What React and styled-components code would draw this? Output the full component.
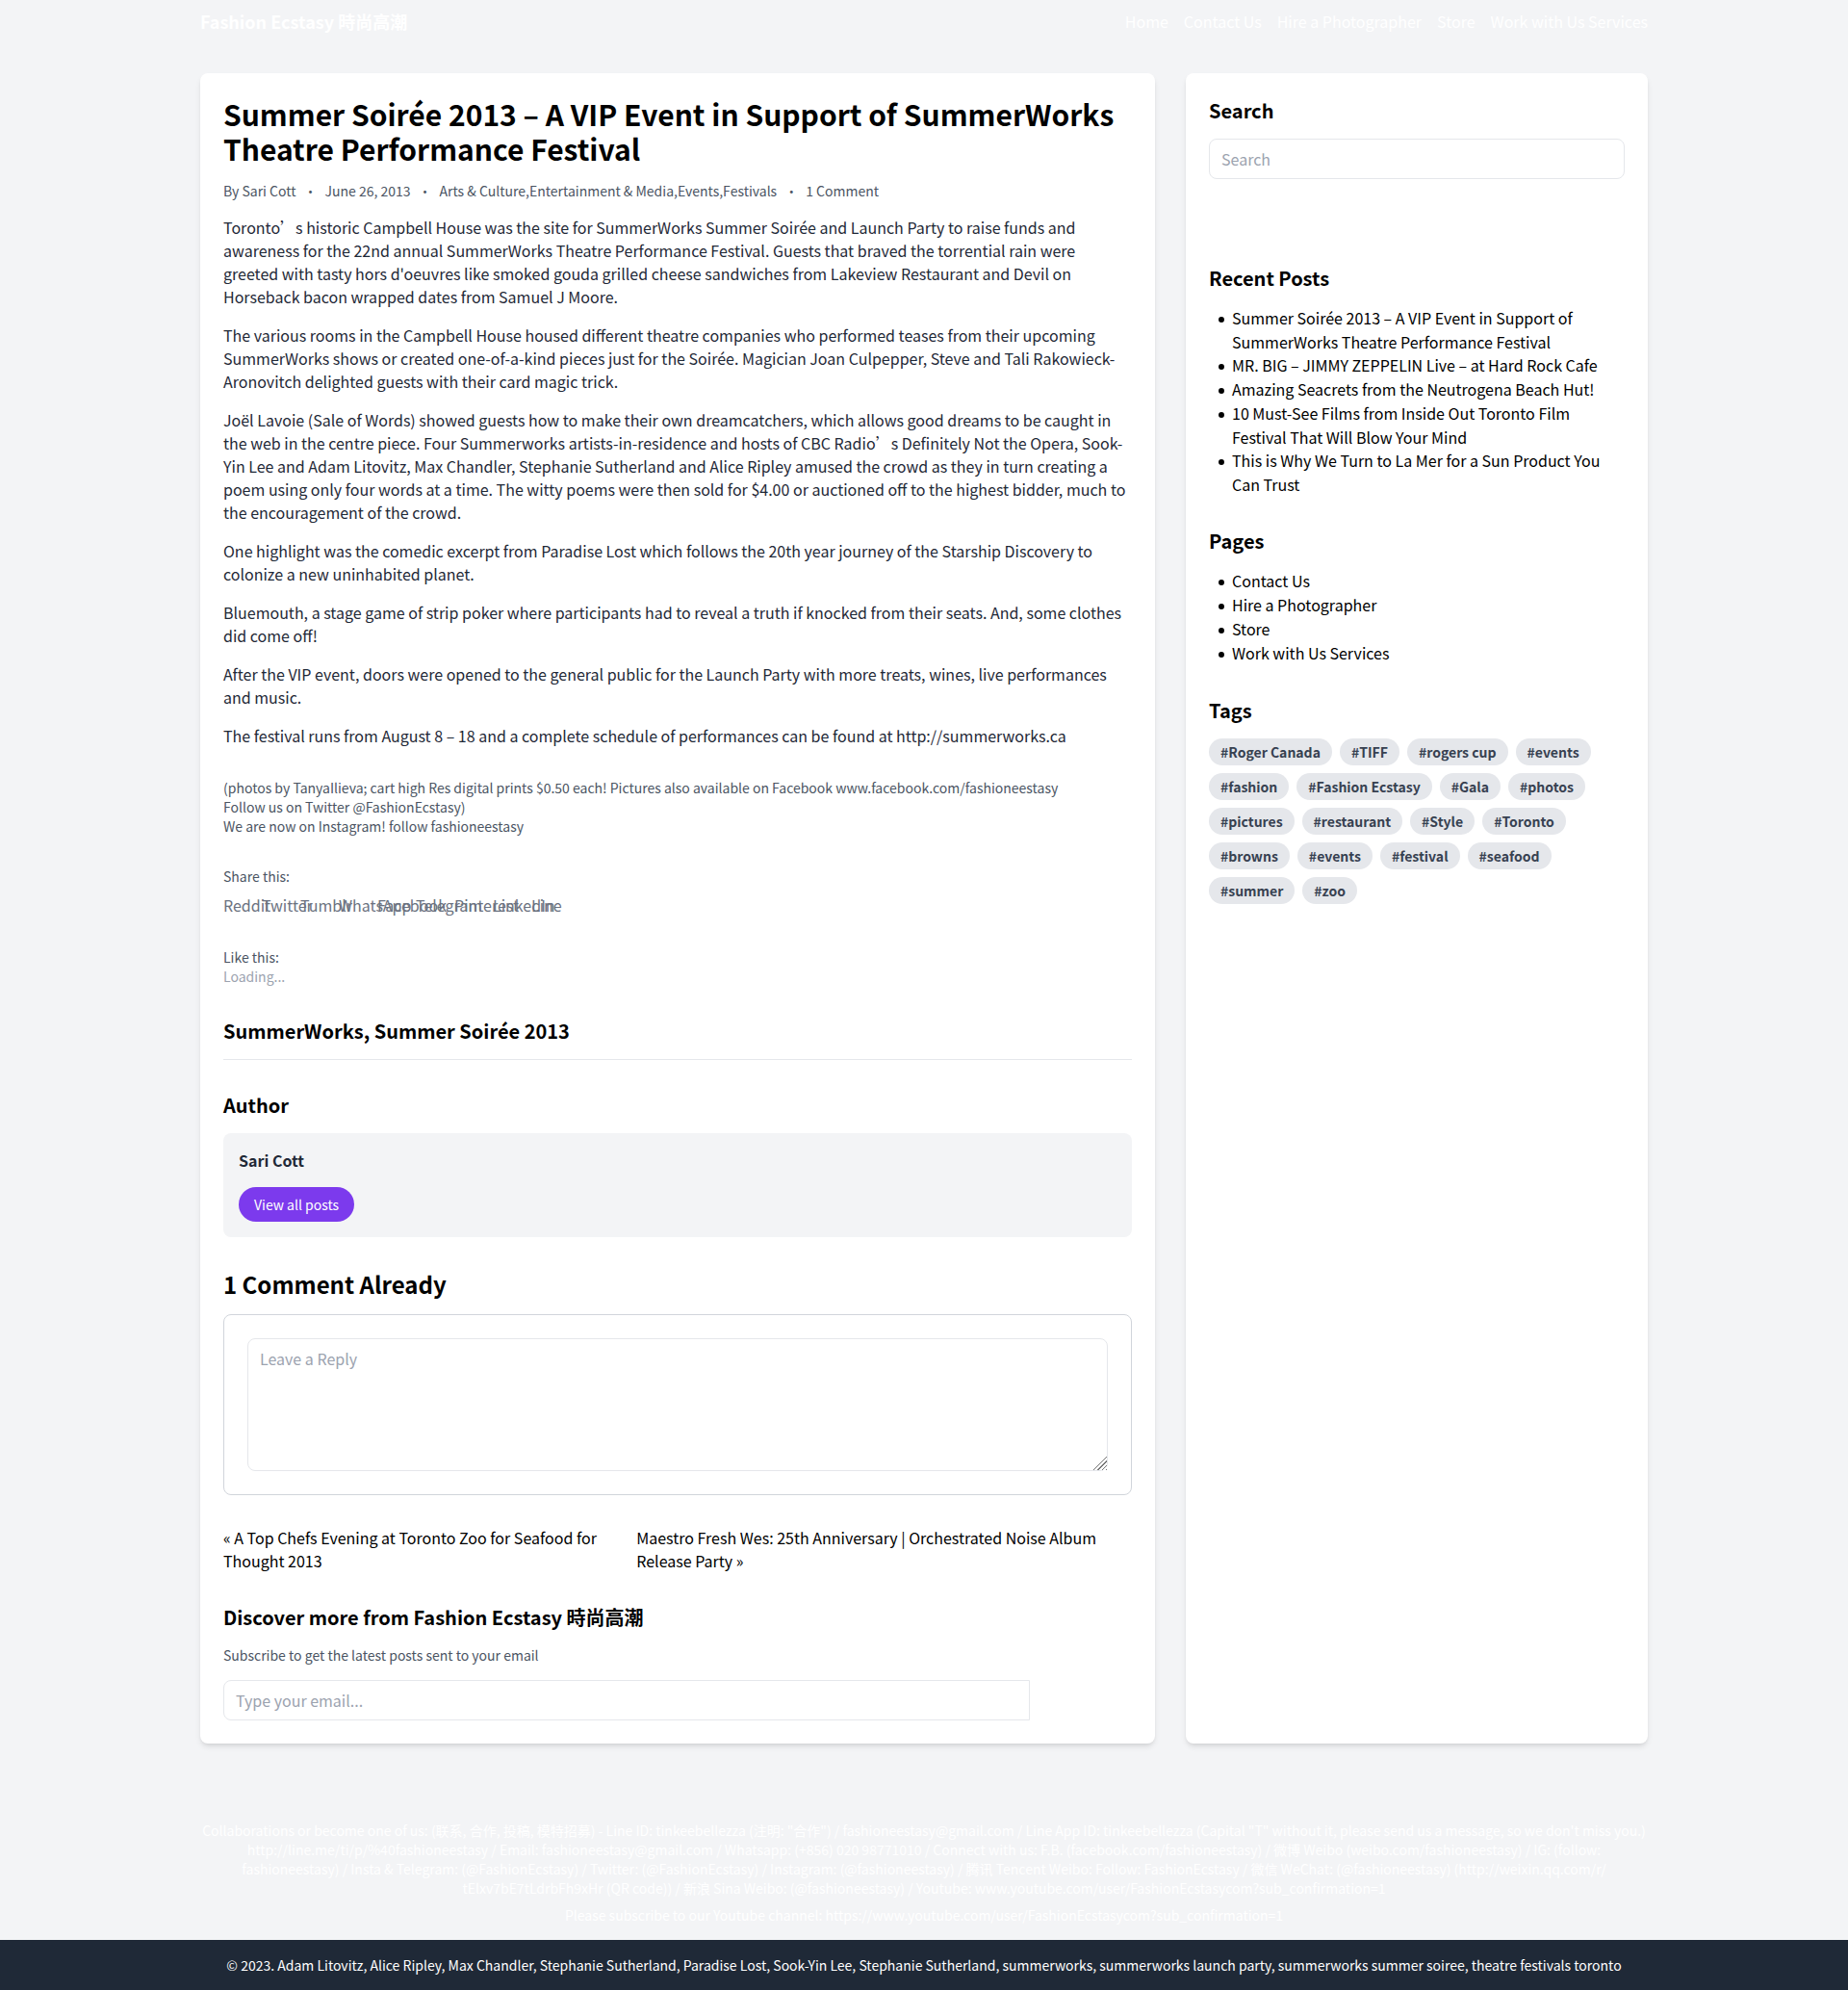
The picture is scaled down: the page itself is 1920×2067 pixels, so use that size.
import React from "react";
import styled, { createGlobalStyle } from "styled-components";

const GlobalStyle = createGlobalStyle`
  *, *::before, *::after { box-sizing: border-box; }
  body {
    margin: 0;
    background: #f3f4f6;
    color: #000;
    font-family: "Noto Sans CJK SC", "Noto Sans", sans-serif;
    font-size: 16px;
    line-height: 24px;
  }
  h1, h2, h3, p, ul { margin: 0; padding: 0; }
  a { color: inherit; text-decoration: none; }
  input, textarea, button { font: inherit; color: inherit; margin: 0; }
`;

const Container = styled.div`
  max-width: 1536px;
  margin: 0 auto;
  padding: 0 16px;
`;

const HeaderBar = styled(Container)`
  display: flex;
  flex-wrap: wrap;
  justify-content: space-between;
  align-items: center;
  padding: 8px 16px;
  color: #fff;
`;

const Brand = styled.a`
  font-size: 18px;
  line-height: 28px;
  font-weight: 700;
`;

const Nav = styled.nav`
  display: flex;
  flex-wrap: wrap;
  gap: 16px;
`;

const Columns = styled.div`
  max-width: 1536px;
  margin: 0 auto;
  padding: 32px 0;
  display: flex;
  flex-wrap: wrap;
`;

const Column = styled.div`
  display: flex;
  flex: 0 0 ${(p) => p.$share};
  min-width: 0;
  padding: 0 16px;
  @media (max-width: 900px) {
    flex-basis: 100%;
  }
`;

const Card = styled.div`
  flex: 1;
  min-width: 0;
  display: flex;
  flex-direction: column;
  gap: 32px;
  padding: 24px;
  background: #fff;
  border-radius: 8px;
  box-shadow: 0 4px 6px -1px rgba(0, 0, 0, 0.1), 0 2px 4px -2px rgba(0, 0, 0, 0.1);
`;

const Stack = styled.section`
  display: flex;
  flex-direction: column;
  align-items: stretch;
  gap: ${(p) => p.$gap || 16}px;
`;

const Title = styled.h1`
  font-size: 30px;
  line-height: 36px;
  font-weight: 700;
`;

const CommentsHeading = styled.h2`
  padding-top: 2px;
  font-size: 24px;
  line-height: 30px;
  font-weight: 700;
`;

const Heading = styled.h3`
  padding-top: 2px;
  font-size: 20px;
  line-height: 26px;
  font-weight: 700;
`;

const RuledHeading = styled(Heading)`
  padding-bottom: 16px;
  border-bottom: 1px solid #e5e7eb;
`;

const Meta = styled.div`
  display: flex;
  flex-wrap: wrap;
  font-size: 14px;
  line-height: 20px;
  color: #4b5563;
`;

const Dot = styled.span`
  margin: 0 8px;
`;

const Paragraph = styled.p`
  color: #1f2937;
`;

const Small = styled.p`
  font-size: 14px;
  line-height: 20px;
  color: ${(p) => (p.$muted ? "#9ca3af" : "#4b5563")};
`;

const ShareLinks = styled.div`
  display: flex;
  gap: 16px;
  color: #6b7280;
`;

const ShareLink = styled.a`
  width: 24px;
  height: 24px;
  white-space: nowrap;
`;

const AuthorBox = styled.div`
  display: flex;
  flex-direction: column;
  align-items: flex-start;
  gap: 16px;
  padding: 16px;
  background: #f3f4f6;
  border-radius: 8px;
`;

const AuthorName = styled.p`
  font-weight: 700;
  color: #1f2937;
`;

const PillButton = styled.button`
  padding: 8px 16px;
  border: 0;
  border-radius: 18px;
  background: #7c3aed;
  color: #fff;
  font-size: 14px;
  line-height: 20px;
  cursor: pointer;
`;

const ReplyBox = styled.form`
  display: flex;
  padding: 24px;
  border: 1px solid #d1d5db;
  border-radius: 8px;
`;

const field = `
  display: block;
  min-width: 0;
  padding: 8px 12px;
  border: 1px solid #e5e7eb;
  border-radius: 8px;
  background: #fff;
  line-height: 24px;
  &::placeholder { color: #9ca3af; opacity: 1; }
`;

const TextArea = styled.textarea`
  ${field}
  flex: 1;
  &::-webkit-resizer {
    background:
      linear-gradient(135deg, #fff 50%, transparent 50%),
      repeating-linear-gradient(135deg, #fff 0 2px, #777 2px 3px);
  }
`;

const TextInput = styled.input`
  ${field}
  flex: 1 1 auto;
  height: 42px;
  ${(p) => p.$joined && "border-radius: 8px 0 0 8px;"}
`;

const SubmitButton = styled.button`
  align-self: flex-start;
  padding: 8px 16px;
  border: 0;
  border-radius: ${(p) => (p.$joined ? "0 8px 8px 0" : "8px")};
  background: transparent;
  color: #fff;
  cursor: pointer;
`;

const PostNav = styled.nav`
  display: flex;
  justify-content: space-between;
`;

const InlineForm = styled.form`
  display: flex;
`;

const StackedForm = styled.form`
  display: flex;
  flex-direction: column;
  gap: 16px;
`;

const LinkList = styled.ul`
  list-style: none;
`;

const LinkItem = styled.li`
  display: flex;
  &::before {
    content: "";
    flex: none;
    width: 6px;
    height: 6px;
    margin: 11px 8px 0 10px;
    border-radius: 50%;
    background: #000;
  }
`;

const ListLink = styled.a`
  display: block;
  &::first-line { line-height: 25px; }
`;

const Tags = styled.div`
  display: flex;
  flex-wrap: wrap;
  gap: 8px;
`;

const Tag = styled.a`
  padding: 4px 12px;
  border-radius: 14px;
  background: #e5e7eb;
  color: #374151;
  font-size: 14px;
  line-height: 20px;
  font-weight: 700;
`;

const Contact = styled(Container)`
  display: flex;
  flex-direction: column;
  gap: 8px;
  padding: 48px 16px 16px;
  font-size: 14px;
  line-height: 20px;
  color: #fff;
  text-align: center;
`;

const Copyright = styled.div`
  padding: 16px;
  background: #1f2937;
  color: #fff;
  font-size: 14px;
  line-height: 20px;
  text-align: center;
`;

const pages = ["Contact Us", "Hire a Photographer", "Store", "Work with Us Services"];

const meta = [
  "By Sari Cott",
  "June 26, 2013",
  "Arts & Culture,Entertainment & Media,Events,Festivals",
  "1 Comment",
];

const paragraphs = [
  "Toronto’s historic Campbell House was the site for SummerWorks Summer Soirée and Launch Party to raise funds and awareness for the 22nd annual SummerWorks Theatre Performance Festival. Guests that braved the torrential rain were greeted with tasty hors d'oeuvres like smoked gouda grilled cheese sandwiches from Lakeview Restaurant and Devil on Horseback bacon wrapped dates from Samuel J Moore.",
  "The various rooms in the Campbell House housed different theatre companies who performed teases from their upcoming SummerWorks shows or created one-of-a-kind pieces just for the Soirée. Magician Joan Culpepper, Steve and Tali Rakowieck-Aronovitch delighted guests with their card magic trick.",
  "Joël Lavoie (Sale of Words) showed guests how to make their own dreamcatchers, which allows good dreams to be caught in the web in the centre piece. Four Summerworks artists-in-residence and hosts of CBC Radio’s Definitely Not the Opera, Sook-Yin Lee and Adam Litovitz, Max Chandler, Stephanie Sutherland and Alice Ripley amused the crowd as they in turn creating a poem using only four words at a time. The witty poems were then sold for $4.00 or auctioned off to the highest bidder, much to the encouragement of the crowd.",
  "One highlight was the comedic excerpt from Paradise Lost which follows the 20th year journey of the Starship Discovery to colonize a new uninhabited planet.",
  "Bluemouth, a stage game of strip poker where participants had to reveal a truth if knocked from their seats. And, some clothes did come off!",
  "After the VIP event, doors were opened to the general public for the Launch Party with more treats, wines, live performances and music.",
  "The festival runs from August 8 – 18 and a complete schedule of performances can be found at http://summerworks.ca",
];

const networks = ["Reddit", "Twitter", "Tumblr", "WhatsApp", "Facebook", "Telegram", "Pinterest", "LinkedIn", "Line"];

const recent = [
  "Summer Soirée 2013 – A VIP Event in Support of SummerWorks Theatre Performance Festival",
  "MR. BIG – JIMMY ZEPPELIN Live – at Hard Rock Cafe",
  "Amazing Seacrets from the Neutrogena Beach Hut!",
  "10 Must-See Films from Inside Out Toronto Film Festival That Will Blow Your Mind",
  "This is Why We Turn to La Mer for a Sun Product You Can Trust",
];

const tags = [
  "Roger Canada", "TIFF", "rogers cup", "events", "fashion", "Fashion Ecstasy", "Gala", "photos",
  "pictures", "restaurant", "Style", "Toronto", "browns", "events", "festival", "seafood", "summer", "zoo",
];

function Links({ title, items }) {
  return (
    <Stack>
      <Heading>{title}</Heading>
      <LinkList>
        {items.map((item) => (
          <LinkItem key={item}><ListLink href="#">{item}</ListLink></LinkItem>
        ))}
      </LinkList>
    </Stack>
  );
}

export default function App() {
  return (
    <>
      <GlobalStyle />
      <HeaderBar as="header">
        <Brand href="#">Fashion Ecstasy 時尚高潮</Brand>
        <Nav>
          {["Home", ...pages].map((page) => <a key={page} href="#">{page}</a>)}
        </Nav>
      </HeaderBar>

      <Columns>
        <Column as="main" $share="66.6667%">
          <Card as="article">
            <Stack>
              <Title>Summer Soirée 2013 – A VIP Event in Support of SummerWorks Theatre Performance Festival</Title>
              <Meta>
                {meta.map((entry, i) => (
                  <React.Fragment key={entry}>
                    {i > 0 && <Dot>·</Dot>}
                    <span>{entry}</span>
                  </React.Fragment>
                ))}
              </Meta>
              {paragraphs.map((text) => <Paragraph key={text}>{text}</Paragraph>)}
            </Stack>

            <Small>
              (photos by TanyaIlieva; cart high Res digital prints $0.50 each! Pictures also available on Facebook www.facebook.com/fashioneestasy
              <br />
              Follow us on Twitter @FashionEcstasy)
              <br />
              We are now on Instagram! follow fashioneestasy
            </Small>

            <Stack $gap={8}>
              <Small>Share this:</Small>
              <ShareLinks>
                {networks.map((name) => <ShareLink key={name} href="#">{name}</ShareLink>)}
              </ShareLinks>
            </Stack>

            <div>
              <Small>Like this:</Small>
              <Small $muted>Loading...</Small>
            </div>

            <RuledHeading>SummerWorks, Summer Soirée 2013</RuledHeading>

            <Stack>
              <Heading>Author</Heading>
              <AuthorBox>
                <AuthorName>Sari Cott</AuthorName>
                <PillButton type="button">View all posts</PillButton>
              </AuthorBox>
            </Stack>

            <Stack>
              <CommentsHeading>1 Comment Already</CommentsHeading>
              <ReplyBox>
                <TextArea rows={5} placeholder="Leave a Reply" aria-label="Leave a Reply" />
              </ReplyBox>
            </Stack>

            <PostNav>
              <a href="#">« A Top Chefs Evening at Toronto Zoo for Seafood for Thought 2013</a>
              <a href="#">Maestro Fresh Wes: 25th Anniversary | Orchestrated Noise Album Release Party »</a>
            </PostNav>

            <Stack>
              <Heading>Discover more from Fashion Ecstasy 時尚高潮</Heading>
              <Small>Subscribe to get the latest posts sent to your email</Small>
              <InlineForm>
                <TextInput $joined type="email" placeholder="Type your email..." aria-label="Email address" />
                <SubmitButton $joined type="submit">Subscribe</SubmitButton>
              </InlineForm>
            </Stack>
          </Card>
        </Column>

        <Column as="aside" $share="33.3333%">
          <Card>
            <Stack>
              <Heading>Search</Heading>
              <StackedForm>
                <TextInput type="search" placeholder="Search" aria-label="Search" />
                <SubmitButton type="submit">Search</SubmitButton>
              </StackedForm>
            </Stack>
            <Links title="Recent Posts" items={recent} />
            <Links title="Pages" items={pages} />
            <Stack>
              <Heading>Tags</Heading>
              <Tags>
                {tags.map((tag, i) => <Tag key={i} href="#">#{tag}</Tag>)}
              </Tags>
            </Stack>
          </Card>
        </Column>
      </Columns>

      <footer>
        <Contact>
          <p>
            Collaborations or become one of us: (联系, 合作, 投稿, 模特招募) - Line ID: tinkeebellezza (注明: "合作") / fashioneestasy@gmail.com / Line App ID: tinkeebellezza (Capital "T" without it, please send us a message, so we don't miss you.) http://line.me/ti/p/%40fashioneestasy / Email: fashioneestasy@gmail.com / Whatsapp: (+856) 020 98771010 / Connect with us: F.B. (facebook.com/fashioneestasy) / 微博 Weibo (weibo.com/fashioneestasy) / IG: (follow: fashioneestasy) / Insta &amp; Telegram: (@FashionEcstasy) / Twitter: (@FashionEcstasy) / Instagram: (@fashioneestasy) / 腾讯 Tencent Weibo: Follow: FashionEcstasy / 微信 WeChat: (@fashioneestasy) (http://weixin.qq.com/r/<wbr />tElxv7bE7tLdrbFh9xHr (QR code)) / 新浪 Sina Weibo: (@fashioneestasy) / Youtube: www.youtube.com/user/FashionEcstasycom?sub_confirmation=1
          </p>
          <p>Please subscribe to our Youtube channel: https://www.youtube.com/user/FashionEcstasycom?sub_confirmation=1</p>
        </Contact>
        <Copyright>
          © 2023. Adam Litovitz, Alice Ripley, Max Chandler, Stephanie Sutherland, Paradise Lost, Sook-Yin Lee, Stephanie Sutherland, summerworks, summerworks launch party, summerworks summer soiree, theatre festivals toronto
        </Copyright>
      </footer>
    </>
  );
}
